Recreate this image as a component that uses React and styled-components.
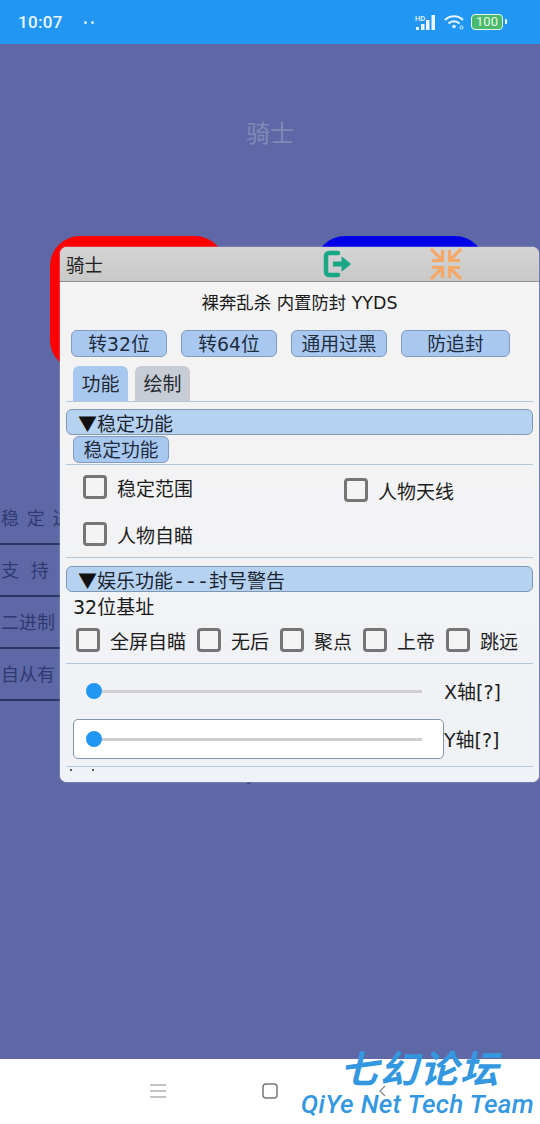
import React from 'react';
import styled, { createGlobalStyle } from 'styled-components';

const FONT = `"DejaVu Sans", "Noto Sans CJK SC", sans-serif`;

const Global = createGlobalStyle`
  html, body { margin: 0; padding: 0; background: #5e68a6; }
  * { box-sizing: border-box; }
  body { font-family: ${FONT}; }
`;

const Screen = styled.div`
  width: 540px; height: 1124px; display: flex; flex-direction: column;
  position: relative; overflow: hidden; font-family: ${FONT};
`;
const StatusBar = styled.div`
  height: 44px; background: #2196f3; display: flex; align-items: center;
  padding: 0 37px 0 18px; color: #eaf6ff; flex: none; font-family: Roboto, sans-serif;
`;
const Time = styled.span`font-size: 17px; font-weight: 500; letter-spacing: 0.3px;`;
const Dots = styled.span`
  display: flex; gap: 4px; margin-left: 21px;
  i { width: 3px; height: 3px; border-radius: 50%; background: #d8efff; display: block; }
`;
const StatusRight = styled.div`margin-left: auto; display: flex; align-items: center; gap: 8px;`;
const Battery = styled.div`
  width: 32px; height: 16px; border: 1.5px solid #e4f8e8; border-radius: 4px; background: #4cba6c;
  color: #e4fbe4; font-size: 13px; line-height: 13px; text-align: center; position: relative; margin-left: -1px;
  &::after { content: ''; position: absolute; right: -4.5px; top: 4px; width: 2px; height: 5px; background: #e8f7ee; border-radius: 0 1px 1px 0; }
`;

const Main = styled.main`
  flex: 1; background: #5e68a6; position: relative; display: flex; flex-direction: column;
`;
const PageTitle = styled.h1`
  margin: 0; padding-top: 76px; height: 192px; text-align: center; font-size: 24px; line-height: 28px;
  font-weight: 400; color: #8289b6; flex: none;
`;
const BigButtons = styled.div`display: flex; padding-left: 50px; gap: 90px; height: 134px; flex: none;`;
const BigButton = styled.div`
  width: ${p => p.$w}px; height: 134px; border-radius: 30px; background: ${p => p.$c};
`;
const Rows = styled.div`margin-top: 123px; width: 62px; flex: none;`;
const BgRow = styled.div`
  height: 52px; border-bottom: 2px solid #2b3366; color: #2f3a72; font-size: 18px; line-height: 28px;
  padding-top: 12px; padding-left: 1px; white-space: nowrap; letter-spacing: ${p => p.$ls || 0}px;
`;
const Stray = styled.span`
  position: absolute; left: 246px; top: 728px; width: 8px; height: 8px; color: #2b3366; font-size: 14px; line-height: 8px;
`;

const Win = styled.section`
  position: absolute; left: 60px; top: 203px; width: 479px; height: 535px;
  background: #f2f2f4; border-radius: 7px; box-shadow: 0 0 2px #aeb2cc; overflow: hidden;
  color: #1a1a1a; display: flex; flex-direction: column;
`;
const TitleBar = styled.header`
  height: 35px; flex: none; background: linear-gradient(#d4d4d4, #c9c9c9); border-bottom: 1px solid #8f8f8f;
  display: flex; align-items: center; padding-left: 6px; position: relative; font-size: 18.500px; color: #222;
`;
const IconBtn = styled.span`position: absolute; left: ${p => p.$x}px; top: ${p => p.$y}px; display: block; line-height: 0;`;
const Body = styled.div`padding: 0 6px 0 6px; flex: 1; display: flex; flex-direction: column;
  background: linear-gradient(#f3f3f4 30%, #eff2f6);`;
const Subtitle = styled.div`text-align: center; font-size: 17.400px; line-height: 22px; padding-top: 10px; height: 48px; white-space: nowrap;`;
const Btn = styled.div`
  height: 27px; width: ${p => p.$w}px; background: #a9c8f0; border: 1px solid #7f9bbd; border-radius: 6px;
  color: #1f2c3d; font-size: 18.800px; line-height: 27px; text-align: center; flex: none; white-space: nowrap;
`;
const BtnRow = styled.div`display: flex; gap: 14px; padding-left: 5px; height: 36px; flex: none;`;
const SubRow = styled.div`display: flex; padding-left: 7px; margin: 1px 0; flex: none;`;
const Tabs = styled.div`display: flex; gap: 7px; padding-left: 7px; height: 35px; align-items: flex-end; flex: none;`;
const Tab = styled.div`
  width: 55px; height: 35px; border-radius: 6px 6px 0 0; background: ${p => p.$on ? '#a9c8f0' : '#c8ccd4'};
  color: #232a33; font-size: 19px; line-height: 37px; text-align: center;
`;
const Divider = styled.hr`
  margin: ${p => p.$mt || 0}px 0 0; border: 0; height: 1px; background: #b4c6da; flex: none;
`;
const Header = styled.div`
  height: 26px; background: #b5d3f1; border: 1px solid #7f97b2; border-radius: 6px; margin-top: ${p => p.$mt}px;
  font-size: 19px; line-height: 26px; padding-left: 11px; color: #1c2430; flex: none; white-space: nowrap;
`;
const Caret = styled.span`font-family: "Noto Sans CJK SC", sans-serif; color: #111;`;
const Dashes = styled.span`font-family: "Liberation Mono", monospace; font-size: 20px;`;
const CheckGrid = styled.div`
  display: grid; grid-template-columns: 261px 1fr; align-content: start; padding-left: 17px; height: 92px; flex: none;
`;
const Check = styled.label`
  display: flex; align-items: center; gap: 10px; height: 24px; font-size: 19px; color: #1d1d1d;
  margin-top: ${p => p.$mt || 0}px; white-space: nowrap;
`;
const Box = styled.span`
  width: 24px; height: 24px; border: 3px solid #757575; border-radius: 4px; background: #f4f4f4; display: block; flex: none;
`;
const Line = styled.div`font-size: 19px; line-height: 24px; padding-left: 7px; height: 24px; margin-top: 3px; flex: none;`;
const CheckRow = styled.div`display: flex; gap: 11px; padding-left: 10px; margin-top: 9px; height: 24px; flex: none; margin-bottom: 11px;`;
const SliderRow = styled.div`
  display: grid; grid-template-columns: 371px 1fr; align-items: center; height: 40px; padding-left: 7px; flex: none;
  margin-top: ${p => p.$mt}px; font-size: 19px; color: #1d1d1d; white-space: nowrap;
`;
const AxisLabel = styled.span`padding-bottom: 2px;`;
const SliderBox = styled.div`
  height: 40px; border-radius: 5px; position: relative;
  ${p => p.$boxed ? 'background: #fff; border: 1px solid #8294a8;' : ''}
`;
const Track = styled.div`
  position: absolute; left: ${p => p.$boxed ? 20 : 21}px; top: ${p => p.$boxed ? 18 : 19}px; width: 328px; height: 3px; background: #cfcfcf;
`;
const Knob = styled.div`
  position: absolute; left: ${p => p.$boxed ? 12 : 13}px; top: ${p => p.$boxed ? 11 : 12}px; width: 16px; height: 16px; border-radius: 50%; background: #2196f3;
`;
const Specks = styled.div`
  display: flex; gap: 20px; padding: 2px 0 0 4px; flex: none;
  i { width: 2px; height: 2px; background: #555; display: block; }
`;

const Nav = styled.nav`
  height: 65px; background: #fff; flex: none; position: relative; display: flex; align-items: center;
  justify-content: center; gap: 96px; padding-bottom: 2px;
`;
const Mark = styled.div`
  position: absolute; left: 300px; top: 1049px; width: 238px; color: #3498e0; font-style: italic;
  font-weight: 500; text-align: right; pointer-events: none; font-family: Roboto, "Noto Sans CJK SC", sans-serif;
`;
const MarkCn = styled.div`font-size: 38px; font-weight: 700; line-height: 42px; letter-spacing: 2px; padding-right: 38px; white-space: nowrap;`;
const MarkEn = styled.div`font-size: 26px; line-height: 26px; white-space: nowrap; padding-right: 4px; letter-spacing: 0.3px;`;

const Exit = () => (
  <svg width="28" height="28" viewBox="0 0 28 28" fill="none" stroke="#1aa784">
    <path d="M15 3H6a3 3 0 0 0-3 3v16a3 3 0 0 0 3 3h9" strokeWidth="4.500" strokeLinecap="round" />
    <path d="M10 14h10" strokeWidth="5" />
    <path d="M19 7 27.500 14 19 21z" fill="#1aa784" stroke="#1aa784" strokeWidth="1" strokeLinejoin="round" />
  </svg>
);
const Compress = () => (
  <svg width="34" height="34" viewBox="0 0 34 34" fill="none" stroke="#f5a868" strokeWidth="3.200">
    <path d="M2 2 12 12M3 13.500H13.500V3" />
    <path d="M32 2 22 12M31 13.500H20.500V3" />
    <path d="M2 32 12 22M3 20.500H13.500V31" />
    <path d="M32 32 22 22M31 20.500H20.500V31" />
  </svg>
);
const Signal = () => (
  <svg width="21" height="17" viewBox="0 0 21 17" fill="#eaf6ff">
    <text x="0" y="6.500" fontSize="7.500" fontFamily="Roboto, sans-serif" fontWeight="500">HD</text>
    <rect x="1" y="13" width="3" height="3" /><rect x="6" y="10" width="3.500" height="6" />
    <rect x="11" y="6" width="3.500" height="10" /><rect x="16.500" y="1" width="3.500" height="15" />
  </svg>
);
const Wifi = () => (
  <svg width="20" height="16" viewBox="0 0 20 16" fill="none" stroke="#eaf6ff" strokeWidth="2">
    <path d="M1 6c5-5 13-5 18 0M4.500 9.500c3-3 8-3 11 0" />
    <circle cx="10" cy="12.500" r="1.800" fill="#eaf6ff" stroke="none" />
    <circle cx="17.500" cy="13.500" r="1.500" strokeWidth="1" />
  </svg>
);
const Menu = () => (
  <svg width="16" height="16" viewBox="0 0 16 16" stroke="#888" strokeWidth="1.200"><path d="M0 2h16M0 8h16M0 14h16" /></svg>
);
const Square = () => (
  <svg width="16" height="16" viewBox="0 0 16 16" fill="none" stroke="#777" strokeWidth="1.500"><rect x="1" y="1" width="14" height="14" rx="3" /></svg>
);
const Back = () => (
  <svg width="16" height="16" viewBox="0 0 16 16" fill="none" stroke="#888" strokeWidth="1.200"><path d="M11 3 6 8l5 5" /></svg>
);

const topBtns = [['转32位', 96], ['转64位', 96], ['通用过黑', 96], ['防追封', 109]];
const cheats = ['全屏自瞄', '无后', '聚点', '上帝', '跳远'];

export default function App() {
  return (
    <Screen>
      <Global />
      <StatusBar>
        <Time>10:07</Time>
        <Dots><i /><i /></Dots>
        <StatusRight>
          <Signal /><Wifi /><Battery>100</Battery>
        </StatusRight>
      </StatusBar>
      <Main>
        <PageTitle>骑士</PageTitle>
        <BigButtons>
          <BigButton $w={175} $c="#ff0000" />
          <BigButton $w={170} $c="#0000e6" />
        </BigButtons>
        <Rows>
          <BgRow $ls={1}>稳 定 进</BgRow>
          <BgRow $ls={3}>支 持</BgRow>
          <BgRow>二进制</BgRow>
          <BgRow>自从有</BgRow>
        </Rows>
        <Stray>y</Stray>
        <Win>
          <TitleBar>
            骑士
            <IconBtn $x={263} $y={3}><Exit /></IconBtn>
            <IconBtn $x={369} $y={0}><Compress /></IconBtn>
          </TitleBar>
          <Body>
            <Subtitle>裸奔乱杀 内置防封 YYDS</Subtitle>
            <BtnRow>{topBtns.map(([t, w]) => <Btn key={t} $w={w}>{t}</Btn>)}</BtnRow>
            <Tabs><Tab $on>功能</Tab><Tab>绘制</Tab></Tabs>
            <Divider />
            <Header $mt={7}><Caret>▼</Caret>稳定功能</Header>
            <SubRow><Btn $w={96}>稳定功能</Btn></SubRow>
            <Divider />
            <CheckGrid>
              <Check $mt={10}><Box />稳定范围</Check>
              <Check $mt={13}><Box />人物天线</Check>
              <Check $mt={20}><Box />人物自瞄</Check>
            </CheckGrid>
            <Divider />
            <Header $mt={8}><Caret>▼</Caret>娱乐功能<Dashes>---</Dashes>封号警告</Header>
            <Line>32位基址</Line>
            <CheckRow>{cheats.map(c => <Check key={c}><Box />{c}</Check>)}</CheckRow>
            <Divider />
            <SliderRow $mt={7}>
              <SliderBox><Track /><Knob /></SliderBox>
              <AxisLabel>X轴[?]</AxisLabel>
            </SliderRow>
            <SliderRow $mt={8}>
              <SliderBox $boxed><Track $boxed /><Knob $boxed /></SliderBox>
              <AxisLabel>Y轴[?]</AxisLabel>
            </SliderRow>
            <Divider $mt={7} />
            <Specks><i /><i /></Specks>
          </Body>
        </Win>
      </Main>
      <Nav><Menu /><Square /><Back /></Nav>
      <Mark>
        <MarkCn>七幻论坛</MarkCn>
        <MarkEn>QiYe Net Tech Team</MarkEn>
      </Mark>
    </Screen>
  );
}
